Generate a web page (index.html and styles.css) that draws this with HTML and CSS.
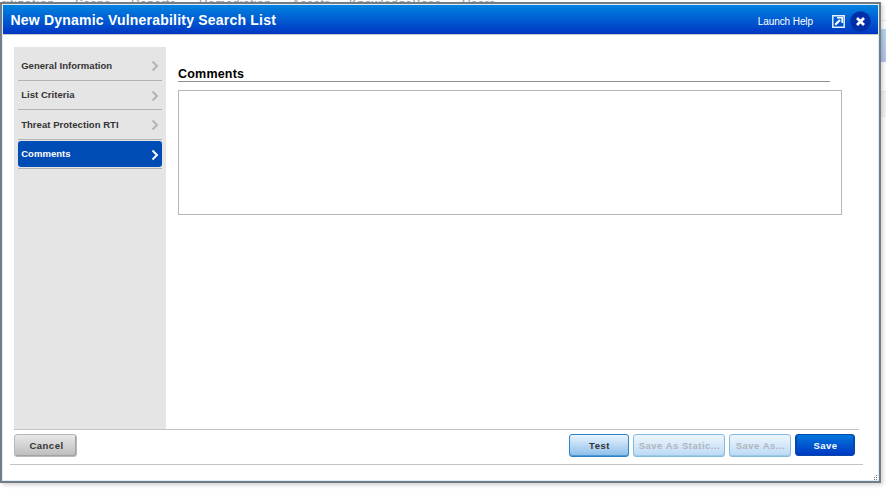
FILE: index.html
```html
<!DOCTYPE html>
<html lang="en">
<head>
<meta charset="utf-8">
<title>New Dynamic Vulnerability Search List</title>
<link rel="stylesheet" href="styles.css">
</head>
<body>
<div class="page">
  <div class="page-nav"><span class="n0">Prioritization</span><span class="n1">Scans</span><span class="n2">Reports</span><span class="n3">Remediation</span><span class="n4">Assets</span><span class="n5">KnowledgeBase</span><span class="n6">Users</span></div>
</div>
<div class="dialog">
  <header class="titlebar">
    <h1><span>New Dynamic Vulnerability Search List</span></h1>
    <a class="help"><span>Launch Help</span></a>
    <svg class="popout" width="13" height="13" viewBox="0 0 13 13"><path d="M4 .8H.8v11.400h11.400V9M4 .8h8.200V9" fill="none" stroke="#e4f1ff" stroke-width="1.5"/><path d="M3.200 9.800L8 5" stroke="#fff" stroke-width="2.200"/><path d="M5 2.800h5.200V8" fill="none" stroke="#fff" stroke-width="1.600"/></svg>
    <svg class="close" width="21" height="21" viewBox="0 0 21 21"><circle cx="10.5" cy="10.5" r="10.3" fill="#002fa8"/><path d="M7 7l7 7M14 7l-7 7" stroke="#fff" stroke-width="2.8"/></svg>
  </header>
  <div class="body">
    <nav class="sidebar">
      <a class="item"><span class="s0">General Information</span><svg width="8" height="12" viewBox="0 0 8 12"><path d="M1.5 1.5L6 6l-4.5 4.5"/></svg></a>
      <a class="item second"><span class="s1">List Criteria</span><svg width="8" height="12" viewBox="0 0 8 12"><path d="M1.5 1.5L6 6l-4.5 4.5"/></svg></a>
      <a class="item"><span class="s2">Threat Protection RTI</span><svg width="8" height="12" viewBox="0 0 8 12"><path d="M1.5 1.5L6 6l-4.5 4.5"/></svg></a>
      <a class="item active"><span class="s3">Comments</span><svg width="8" height="12" viewBox="0 0 8 12"><path d="M1.5 1.5L6 6l-4.5 4.5"/></svg></a>
    </nav>
    <main class="content">
      <h2><span>Comments</span></h2>
      <textarea aria-label="Comments"></textarea>
    </main>
  </div>
  <footer class="footer">
    <button class="btn cancel"><span>Cancel</span></button>
    <div class="actions">
      <button class="btn test"><span>Test</span></button>
      <button class="btn disabled static"><span>Save As Static...</span></button>
      <button class="btn disabled as"><span>Save As...</span></button>
      <button class="btn save"><span>Save</span></button>
    </div>
  </footer>
  <svg class="grip" width="5" height="5" viewBox="0 0 5 5"><path d="M3 0h1v1h-1zM1 2h1v1h-1zM3 2h1v1h-1zM1 4h1v1h-1zM3 4h1v1h-1z" fill="#777"/></svg>
</div>
</body>
</html>
```
FILE: styles.css
```css
* { box-sizing: border-box; }
body {
  margin: 0;
  width: 886px;
  height: 489px;
  overflow: hidden;
  position: relative;
  background: #fff;
  font-family: "Liberation Sans", Arial, sans-serif;
}
.page {
  height: 489px;
  overflow: hidden;
  background: linear-gradient(#fff 0 20px, #ededed 20px 21px, #fff 21px 29px, #b9d8f0 29px, #b3c3ec 62px, #fff 62px 91px, #e9e9e9 91px 92px, #f5f5f5 92px 117px, #fff 117px);
}
.page-nav {
  display: flex;
  gap: 22px;
  width: 600px;
  height: 14px;
  margin-top: -3px;
  margin-left: -23px;
  color: #999;
  font-size: 12px;
  line-height: 14px;
  letter-spacing: .45px;
  white-space: nowrap;
}
.n0 { width: 76px; letter-spacing: .85px; }
.n1 { width: 34px; }
.n2 { width: 46px; }
.n3 { width: 71px; }
.n4 { width: 35px; }
.n5 { width: 91px; }
.dialog {
  position: absolute;
  top: 2px;
  left: 0;
  width: 881px;
  height: 481px;
  display: flex;
  flex-direction: column;
  border: 2px solid #757c84;
  background: #fff;
  box-shadow: inset 0 0 0 1px #dcecf8, 2px 2px 4px rgba(0, 0, 0, .18);
}
.titlebar {
  display: flex;
  align-items: center;
  flex: none;
  height: 30px;
  margin: 1px 1px 0;
  padding: 0 7px 0 7.5px;
  border-bottom: 1px solid #c5c5c5;
  background: linear-gradient(#0083e0, #0036c3);
  color: #fff;
}
h1 {
  flex: 1;
  margin: 0;
  font-size: 14px;
  line-height: 20px;
  letter-spacing: .21px;
}
.help { font-size: 10px; line-height: 14px; margin: 4px 19px 0 0; letter-spacing: -.08px; white-space: nowrap; }
.popout { margin: 3px 5px 0 0; }
.close { margin-top: 4px; }
.body { display: flex; flex: none; height: 395px; margin: 0 20px 0 12px; border-bottom: 1px solid #c4c4c4; }
.sidebar { width: 152px; margin-top: 12px; padding: 4px; background: #e5e5e5; }
.item {
  display: flex;
  justify-content: space-between;
  align-items: center;
  height: 29.5px;
  padding: 0 3px 0 3.2px;
  border-bottom: 1px solid #b3b3b3;
  color: #333;
  font-size: 9.5px;
  font-weight: bold;
  letter-spacing: .04px;
  white-space: nowrap;
}
.item svg { margin-top: 2px; fill: none; stroke: #b4b4b4; stroke-width: 2; }
.item.active { position: relative; z-index: 0; color: #fff; }
.item.active::before { content: ""; position: absolute; z-index: -1; inset: 1px 0; border-radius: 3px; background: #004cb5; }
.item.active svg { stroke: #fff; }
.content { padding: 30px 0 0 12px; }
h2 { width: 652px; height: 17px; margin: 0 0 8px; border-bottom: 1px solid #8f8f8f; font-size: 12.5px; line-height: 18px; letter-spacing: .2px; }
textarea { display: block; width: 664px; height: 125px; border: 1px solid #b7b7b7; background: #fff; resize: none; }
.footer {
  display: flex;
  justify-content: space-between;
  flex: none;
  height: 35px;
  margin: 0 16px 0 8px;
  padding: 4px 8px 0 4px;
  border-bottom: 1px solid #c4c4c4;
}
.actions { display: flex; gap: 4px; }
.btn {
  height: 23px;
  padding: 0 0 0 1px;
  border: 1px solid;
  border-radius: 3px;
  font: bold 9.5px/21px "Liberation Sans", Arial, sans-serif;
  letter-spacing: .5px;
  white-space: nowrap;
  color: #333;
}
.cancel { width: 63px; border-color: #b8b8b8; background: linear-gradient(#e8e8e8, #bcbcbc); box-shadow: inset -1px -1px #a3a3a3; padding-left: 2px; }
.test { width: 60px; border-color: #2c83c8; background: linear-gradient(#e8f4fe, #8bbdea); box-shadow: inset 0 -1px #4c99d4; }
.disabled { border-color: #84bade; color: #b0b5ba; background: linear-gradient(#edf6fd, #bbdaf5); box-shadow: inset 0 -1px #9bc9e8; }
.static { width: 92px; }
.as { width: 62px; }
.save { width: 60px; height: 22px; border-color: #0647a9; color: #fff; background: linear-gradient(#0077dc, #0038c2); box-shadow: inset 1px 0 #0649b0, inset -1px 0 #0649b0; }
.grip { position: absolute; right: 1px; bottom: 1px; }
```
